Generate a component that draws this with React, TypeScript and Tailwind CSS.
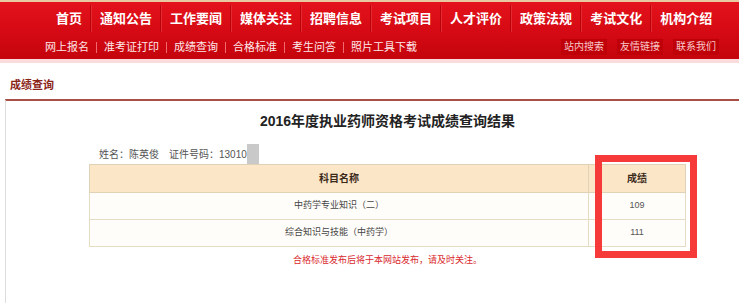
const mainNav = ['首页', '通知公告', '工作要闻', '媒体关注', '招聘信息', '考试项目', '人才评价', '政策法规', '考试文化', '机构介绍']
const subNav = ['网上报名', '准考证打印', '成绩查询', '合格标准', '考生问答', '照片工具下载']
const quick = ['站内搜索', '友情链接', '联系我们']

const scores = [
  { name: '中药学专业知识（二）', score: 109 },
  { name: '综合知识与技能（中药学）', score: 111 },
]

export default function App() {
  return (
    <div className="relative h-[303px] w-full overflow-hidden bg-white font-['Liberation_Sans','Noto_Sans_CJK_SC',sans-serif]">
      {/* 顶部导航 */}
      <div className="h-[2px] bg-[#e9c9a2]" />
      <div className="bg-gradient-to-b from-[#e4121c] via-[#d60a14] to-[#c4040c]">
        <div className="flex h-[33px] items-center pl-[48px]">
          {mainNav.map((item, i) => (
            <div key={item} className="flex items-center">
              {i > 0 && (
                <div className="flex h-[27px]">
                  <span className="w-px bg-[#b8020c]" />
                  <span className="w-px bg-[#e52a32]" />
                </div>
              )}
              <span className="px-[8px] text-[13px] font-bold leading-[16px] text-white">{item}</span>
            </div>
          ))}
        </div>
        <div className="flex h-[24px] items-center justify-between pl-[45px] pr-[20px]">
          <div className="flex items-center">
            {subNav.map((item, i) => (
              <div key={item} className="flex items-center">
                {i > 0 && <span className="mx-[7px] h-[11px] w-px bg-[#ee6a6e]" />}
                <span className="text-[11px] leading-[14px] text-[#fde8e8]">{item}</span>
              </div>
            ))}
          </div>
          <div className="flex gap-[10px]">
            {quick.map((item) => (
              <span
                key={item}
                className="flex h-[16px] w-[46px] items-center justify-center bg-[#bf0008] text-[10px] leading-[12px] text-[#f9c9c9]"
              >
                {item}
              </span>
            ))}
          </div>
        </div>
      </div>
      <div className="h-[4px] bg-[#fadcdc]" />

      {/* 栏目标题 */}
      <div className="h-[36px] pl-[10px] pt-[16px] text-[11px] font-bold leading-[12px] text-[#8a2418]">成绩查询</div>

      {/* 内容面板 */}
      <div className="ml-[5px] h-[220px] w-[764px] border-l border-t-2 border-l-[#dddddd] border-t-[#a84f48]">
        <div className="flex flex-col items-center">
          <h1 className="mt-[10px] text-[14px] font-bold leading-[20px] text-[#222222]">
            2016年度执业药师资格考试成绩查询结果
          </h1>
          <div className="w-[597px]">
            <div className="mt-[13px] flex h-[20px] items-center pl-[10px] text-[10px] text-[#555555]">
              <span>姓名：陈英俊</span>
              <span className="ml-[10px]">证件号码：13010</span>
              <span className="h-[20px] w-[12px] bg-[#c9c9c9]" />
            </div>
            <table className="w-full border-collapse border border-[#e0d2b6] text-[9px]">
              <thead>
                <tr className="h-[28px] bg-[#fbe6c7]">
                  <th className="border border-[#e0d2b6] text-[10px] font-bold text-[#3a2a1a]">科目名称</th>
                  <th className="w-[97px] border border-[#e0d2b6] text-[10px] font-bold text-[#3a2a1a]">成绩</th>
                </tr>
              </thead>
              <tbody>
                {scores.map((row) => (
                  <tr key={row.name} className="h-[27px] bg-[#fffdfa]">
                    <td className="border border-[#e6dcc6] text-center text-[#444444]">{row.name}</td>
                    <td className="border border-[#e6dcc6] text-center text-[#555555]">{row.score}</td>
                  </tr>
                ))}
              </tbody>
            </table>
            <p className="mt-[7px] text-center text-[9px] leading-[12px] text-[#d9292d]">
              合格标准发布后将于本网站发布，请及时关注。
            </p>
          </div>
        </div>
      </div>

      {/* 标注框 */}
      <div className="absolute left-[595px] top-[155px] h-[103px] w-[102px] border-[7px] border-[#f63a3a]" />
    </div>
  )
}
